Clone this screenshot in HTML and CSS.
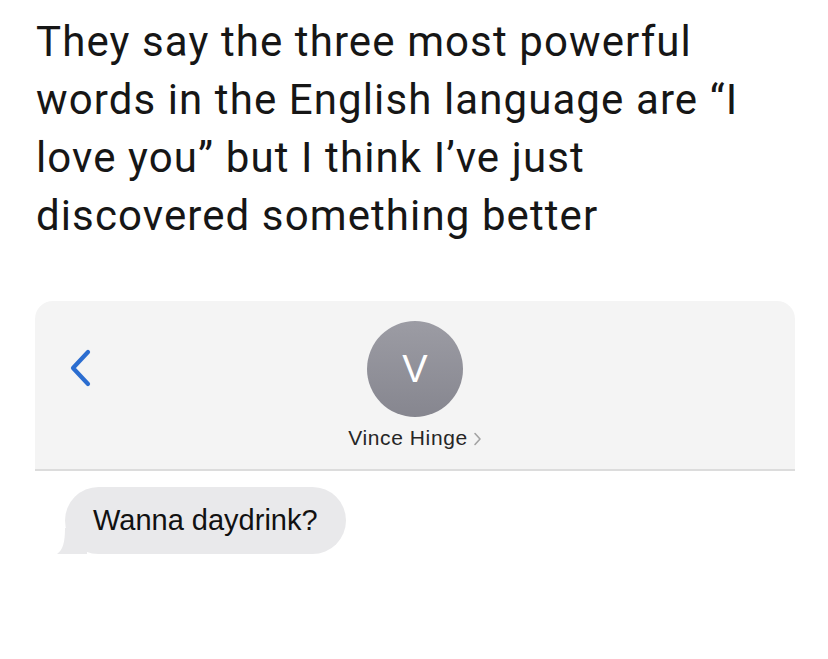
FILE: index.html
```html
<!DOCTYPE html>
<html lang="en">
<head>
<meta charset="utf-8">
<title>Tweet</title>
<link rel="stylesheet" href="styles.css">
</head>
<body>
<main class="page">
  <p class="tweet">They say the three most powerful words in the English language are “I love you” but I think I’ve just discovered something better</p>
  <section class="chat">
    <header class="chat-head">
      <a class="back" aria-label="Back">
        <svg width="24" height="38" viewBox="0 0 24 38"><path d="M20 3 L5 19 L20 35" fill="none" stroke="#2b6dd0" stroke-width="4.2" stroke-linecap="round" stroke-linejoin="round"/></svg>
      </a>
      <div class="contact">
        <div class="avatar">V</div>
        <div class="name">Vince Hinge <svg class="chev" width="9" height="14" viewBox="0 0 9 14"><path d="M2 1.5 L7 7 L2 12.5" fill="none" stroke="#a3a3a3" stroke-width="1.6" stroke-linecap="round" stroke-linejoin="round"/></svg></div>
      </div>
    </header>
    <div class="messages">
      <div class="bubble">Wanna daydrink?</div>
    </div>
  </section>
</main>
</body>
</html>
```
FILE: styles.css
```css
html, body {
  margin: 0;
  padding: 0;
  background: #ffffff;
}
.page {
  width: 828px;
  height: 659px;
  overflow: hidden;
  font-family: Roboto, "Liberation Sans", sans-serif;
}
.tweet {
  margin: 0;
  width: 740px;
  padding: 13px 0 0 36px;
  font-size: 42px;
  letter-spacing: 1.1px;
  line-height: 58px;
  color: #161616;
}
.chat {
  margin: 56px 33px 0 35px;
}
.chat-head {
  position: relative;
  background: #f4f4f4;
  border-radius: 18px 18px 0 0;
  border-bottom: 2px solid #dcdcdc;
  height: 168px;
  display: flex;
  justify-content: center;
}
.back {
  position: absolute;
  left: 33px;
  top: 48px;
  display: block;
}
.contact {
  display: flex;
  flex-direction: column;
  align-items: center;
  padding-top: 20px;
}
.avatar {
  width: 96px;
  height: 96px;
  border-radius: 50%;
  background: linear-gradient(#9c9ca4, #86868f);
  color: #ffffff;
  font-family: "Liberation Sans", sans-serif;
  font-size: 38px;
  line-height: 96px;
  text-align: center;
}
.name {
  margin-top: 9px;
  font-family: "Liberation Sans", sans-serif;
  font-size: 21px;
  letter-spacing: 0.6px;
  color: #262626;
  display: flex;
  align-items: center;
  gap: 5px;
}
.chev {
  display: block;
  margin-top: 2px;
}
.messages {
  padding: 16px 0 0 30px;
}
.bubble {
  position: relative;
  display: inline-block;
  background: #e9e9eb;
  border-radius: 34px;
  padding: 0 28px;
  height: 67px;
  line-height: 67px;
  font-family: "Liberation Sans", sans-serif;
  font-size: 29px;
  color: #111111;
}
.bubble::before {
  content: "";
  position: absolute;
  left: -8px;
  bottom: 0;
  width: 30px;
  height: 26px;
  background: #e9e9eb;
  clip-path: path("M8 0 L30 0 L30 26 L0 26 C6 22 8 14 8 0 Z");
}
```
